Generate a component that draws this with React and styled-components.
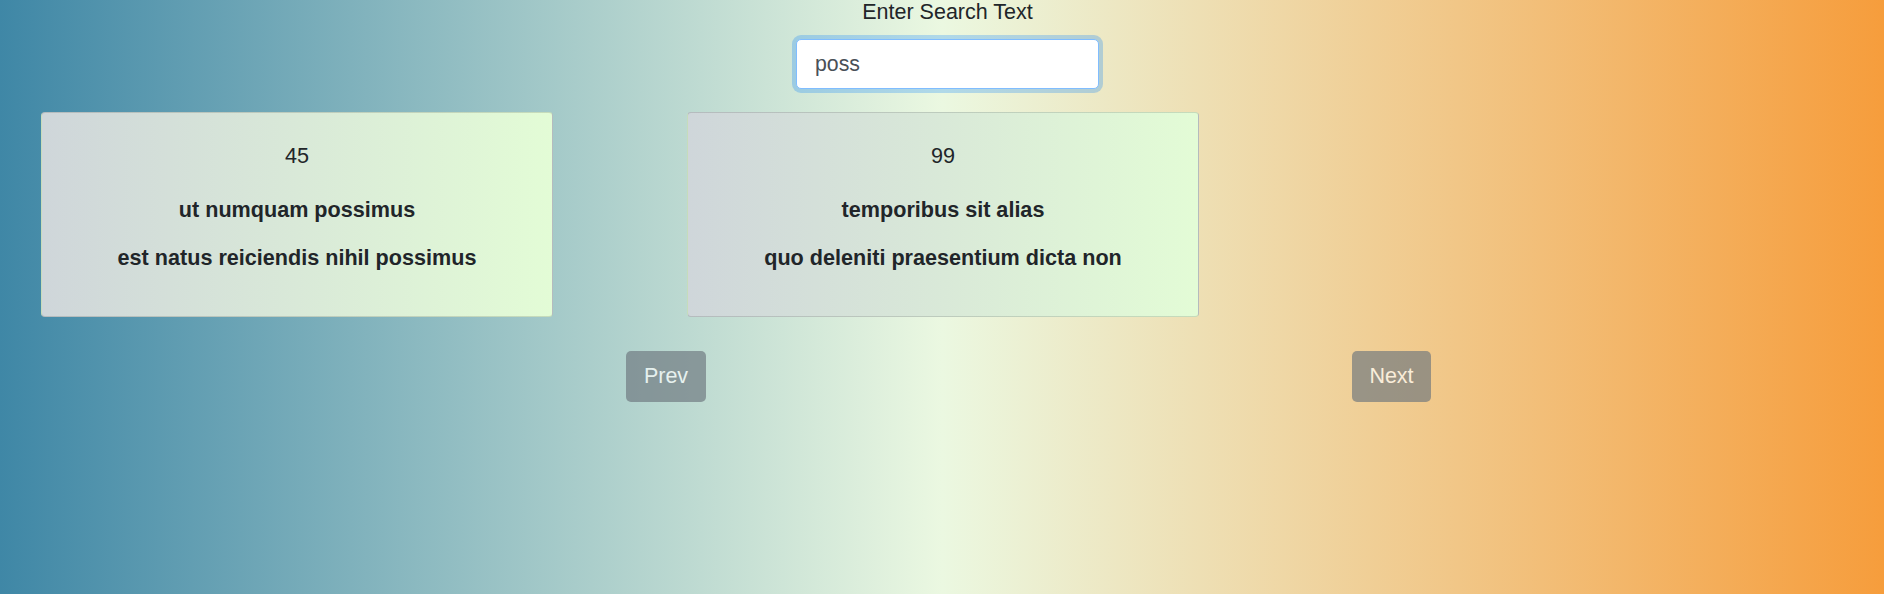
import styled, { createGlobalStyle } from 'styled-components';

const GlobalStyle = createGlobalStyle`
  body {
    margin: 0;
    min-height: 100vh;
    background: linear-gradient(to right, #3f87a6, #ebf8e1, #f69d3c);
    font-family: 'Liberation Sans', Arial, sans-serif;
    color: #212529;
  }
`;

const Page = styled.div`
  display: flex;
  flex-direction: column;
  min-height: 594px;
`;

const SearchBox = styled.div`
  display: flex;
  flex-direction: column;
  align-items: center;
  padding-left: 11px;
`;

const Label = styled.label`
  font-size: 21.5px;
  line-height: 24px;
`;

const Input = styled.input`
  box-sizing: border-box;
  width: 303px;
  height: 50px;
  margin-top: 15px;
  padding: 0 18px;
  border: 1px solid #80bdff;
  border-radius: 5px;
  box-shadow: 0 0 0 4px rgba(0, 123, 255, 0.25);
  outline: none;
  background: #fff;
  font-family: inherit;
  font-size: 21.3px;
  color: #495057;
`;

const CardRow = styled.div`
  display: flex;
  gap: 134px;
  padding-left: 41px;
  margin-top: 23px;
`;

const Card = styled.div`
  box-sizing: border-box;
  width: 512px;
  height: 205px;
  display: flex;
  flex-direction: column;
  align-items: center;
  padding-top: 31px;
  border: 1px solid rgba(0, 0, 0, 0.125);
  border-radius: 4px;
  background: linear-gradient(to right, #cfd6da, #e3fcd6);
  text-align: center;
`;

const Id = styled.div`
  font-size: 21.6px;
  line-height: 24px;
`;

const Title = styled.div`
  margin-top: 30px;
  font-size: 21.6px;
  line-height: 24px;
  font-weight: bold;
`;

const Body = styled.div`
  margin-top: 24px;
  font-size: 21.6px;
  line-height: 24px;
  font-weight: bold;
`;

const Pager = styled.div`
  display: flex;
  gap: 646px;
  padding-left: 626px;
  margin-top: 34px;
`;

const PageButton = styled.button`
  width: ${(props) => props.w}px;
  height: 51px;
  padding: 0;
  border: none;
  border-radius: 5px;
  background: #6c757d;
  color: #fff;
  opacity: 0.65;
  font-family: inherit;
  font-size: 21.5px;
`;

const posts = [
  { id: 45, title: 'ut numquam possimus', body: 'est natus reiciendis nihil possimus' },
  { id: 99, title: 'temporibus sit alias', body: 'quo deleniti praesentium dicta non' },
];

export default function App() {
  return (
    <Page>
      <GlobalStyle />
      <SearchBox>
        <Label>Enter Search Text</Label>
        <Input defaultValue='poss' />
      </SearchBox>
      <CardRow>
        {posts.map((p) => (
          <Card key={p.id}>
            <Id>{p.id}</Id>
            <Title>{p.title}</Title>
            <Body>{p.body}</Body>
          </Card>
        ))}
      </CardRow>
      <Pager>
        <PageButton w={80} disabled>Prev</PageButton>
        <PageButton w={79} disabled>Next</PageButton>
      </Pager>
    </Page>
  );
}
